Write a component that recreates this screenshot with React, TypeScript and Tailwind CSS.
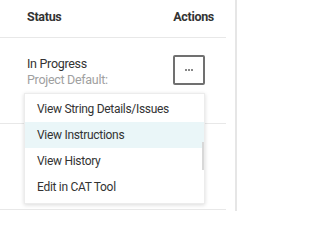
const menuItems = [
    {label: "View String Details/Issues"},
    {label: "View Instructions", active: true},
    {label: "View History"},
    {label: "Edit in CAT Tool"},
];

const App = () => {
    return <div className="relative w-[239px] h-[211px] bg-white overflow-hidden text-[12px] text-[#333] font-['Roboto',sans-serif] tracking-[-0.3px] flex">
        <div className="w-[226px] flex flex-col">
            <div className="h-[38px] flex items-center justify-between pl-[27px] pr-[12px] border-b border-[#e8e8e8] font-bold text-[12.5px] pb-[2px]">
                <span>Status</span>
                <span>Actions</span>
            </div>
            <div className="h-[86px] flex items-start justify-between pl-[27px] pr-[21px] pt-[18px] border-b border-[#e8e8e8]">
                <div className="flex flex-col leading-[16px] text-[12.5px]">
                    <span>In Progress</span>
                    <span className="text-[#a0a0a0]">Project Default:</span>
                </div>
                <button className="mt-[-1px] w-[32px] h-[30px] border-2 border-[#707070] rounded-[2px] flex items-center justify-center gap-[1px]">
                    <span className="w-[2px] h-[2px] bg-[#888]"></span>
                    <span className="w-[2px] h-[2px] bg-[#888]"></span>
                    <span className="w-[2px] h-[2px] bg-[#888]"></span>
                </button>
            </div>
            <div className="h-[86px] border-b border-[#e8e8e8]"></div>
        </div>
        <div className="ml-[9px] w-[2px] h-full bg-[#e6e6e6]"></div>

        {/* dropdown */}
        <div className="absolute left-[24px] top-[93px] w-[181px] h-[111px] bg-white border border-[#ececec] shadow-[0_1px_4px_rgba(0,0,0,0.15)] pt-[2px]">
            {menuItems.map(item =>
                <div key={item.label}
                     className={`h-[26px] flex items-center pl-[12px] ${item.active ? "bg-[#eaf6f8]" : ""}`}>
                    {item.label}
                </div>
            )}
            <div className="absolute right-0 top-[48px] w-[2px] h-[28px] bg-[#d8d8d8]"></div>
        </div>
    </div>
}

export default App;
